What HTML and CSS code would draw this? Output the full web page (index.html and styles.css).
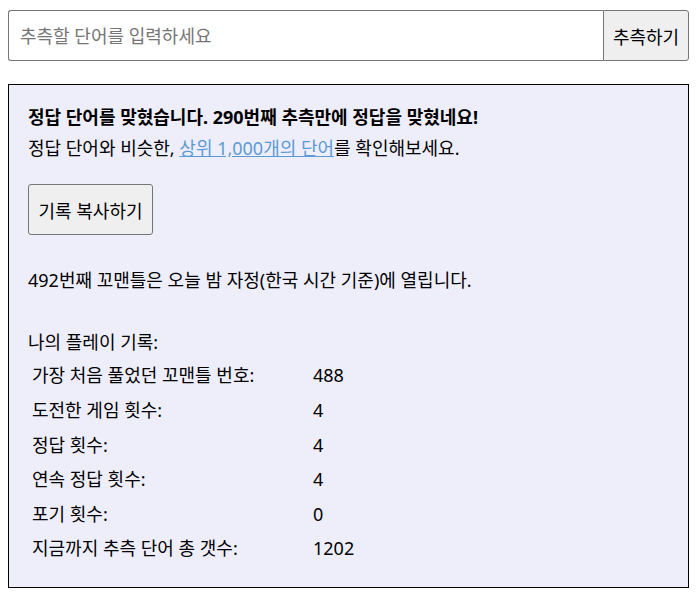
FILE: index.html
```html
<!DOCTYPE html>
<html lang="ko">
<head>
<meta charset="utf-8">
<link rel="stylesheet" href="styles.css">
</head>
<body>
<form class="guess">
  <input class="guess-input" type="text" placeholder="추측할 단어를 입력하세요">
  <button class="guess-btn" type="button">추측하기</button>
</form>
<div class="result">
  <div class="msg">
    <b>정답 단어를 맞혔습니다. 290번째 추측만에 정답을 맞혔네요!</b><br>
    정답 단어와 비슷한, <a class="link" href="#">상위 1,000개의 단어</a>를 확인해보세요.
  </div>
  <button class="copy-btn" type="button">기록 복사하기</button>
  <div class="next">492번째 꼬맨틀은 오늘 밤 자정(한국 시간 기준)에 열립니다.</div>
  <div class="stats-title">나의 플레이 기록:</div>
  <table class="stats">
    <tr><td class="k">가장 처음 풀었던 꼬맨틀 번호:</td><td>488</td></tr>
    <tr><td class="k">도전한 게임 횟수:</td><td>4</td></tr>
    <tr><td class="k">정답 횟수:</td><td>4</td></tr>
    <tr><td class="k">연속 정답 횟수:</td><td>4</td></tr>
    <tr><td class="k">포기 횟수:</td><td>0</td></tr>
    <tr><td class="k">지금까지 추측 단어 총 갯수:</td><td>1202</td></tr>
  </table>
</div>
</body>
</html>
```

FILE: styles.css
```css
body {
  margin: 8px;
  font-family: "Noto Sans", "Noto Sans CJK KR", sans-serif;
  font-size: 18px;
  color: #000;
  background: #fff;
}
.guess {
  display: flex;
  margin: 2px 0 0 0;
  height: 51px;
}
.guess-input {
  flex: 1;
  min-width: 0;
  box-sizing: border-box;
  height: 51px;
  border: 1px solid #767676;
  border-right: none;
  border-radius: 3px 0 0 3px;
  padding: 0 11px;
  font-family: inherit;
  font-size: 18px;
  outline: none;
}
.guess-input::placeholder {
  color: #757575;
}
.guess-btn {
  box-sizing: border-box;
  width: 86px;
  height: 51px;
  border: 1px solid #767676;
  border-radius: 0 3px 3px 0;
  background: #efefef;
  font-family: inherit;
  font-size: 18px;
  color: #000;
  padding: 0;
}
.result {
  margin-top: 23px;
  border: 1px solid #000;
  background: #eeeefb;
  padding: 17px 19px 20px 19px;
  line-height: 30.6px;
}
.msg b {
  font-weight: 700;
}
.link {
  color: #5b9bd5;
}
.copy-btn {
  display: block;
  margin-top: 21px;
  box-sizing: border-box;
  width: 125px;
  height: 51px;
  border: 1px solid #767676;
  border-radius: 3px;
  background: #efefef;
  font-family: inherit;
  font-size: 18px;
  color: #000;
  padding: 0;
}
.next {
  margin-top: 30px;
}
.stats-title {
  margin-top: 31px;
}
.stats {
  border-spacing: 2px;
  margin-left: 1px;
}
.stats td {
  padding: 1px 1px;
  line-height: 30.6px;
}
.stats td.k {
  width: 277px;
}
```
